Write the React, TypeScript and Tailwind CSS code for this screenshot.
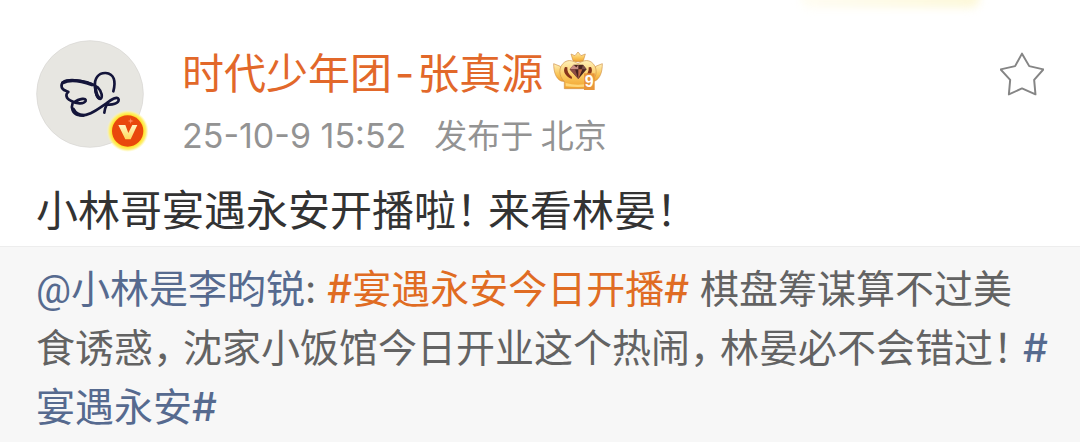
import type { ReactNode } from "react";

const latin = "font-['Inter','Noto_Sans_CJK_SC',sans-serif] leading-none";

function Avatar() {
  return (
    <svg
      viewBox="50 28 324 324"
      className="size-[108px] shrink-0 overflow-visible"
      role="img"
      aria-label="时代少年团-张真源"
    >
      <defs>
        <radialGradient id="glow">
          <stop offset="0.76" stopColor="#ffe52e" />
          <stop offset="0.88" stopColor="#fff07a" />
          <stop offset="1" stopColor="#fff8b8" stopOpacity="0" />
        </radialGradient>
        <linearGradient id="vee" x1="0" y1="0" x2="0" y2="1">
          <stop offset="0" stopColor="#fff6c4" />
          <stop offset="1" stopColor="#ffd95a" />
        </linearGradient>
      </defs>
      <circle cx="212" cy="190" r="160" fill="#e7e6e1" stroke="#d6d5d1" strokeWidth="2" />
      <g fill="none" stroke="#14153a" strokeWidth="8" strokeLinecap="round" strokeLinejoin="round">
        <path d="M282 182C290 152 285 129 259 127C236 126 225 145 227 166C228 184 233 204 242 205C252 202 247 182 236 171C222 160 192 149 158 148C136 148 124 155 127 169C129 180 139 179 147 184C138 190 139 203 154 210C170 220 194 221 199 211C201 201 183 202 160 217C154 232 160 248 176 253C205 260 233 237 261 218C276 207 294 195 298 206C299 219 278 224 260 221" />
        <path d="M262 222C259 228 256 235 255 246" />
        <path d="M130 156C150 146 185 150 218 162M228 168C229 185 234 198 240 203M162 236C168 248 178 254 192 254" strokeWidth="10" />
      </g>
      <circle cx="325" cy="301" r="63" fill="url(#glow)" />
      <circle cx="325" cy="301" r="47" fill="#e9480c" />
      <path d="M297 283H318L327 307L339 283H354L334 326H318Z" fill="url(#vee)" />
      <path d="M334 262L336 269L343 271L336 273L334 280L332 273L325 271L332 269Z" fill="#ff8a5c" />
    </svg>
  );
}

function CrownBadge() {
  return (
    <svg viewBox="40 30 150 120" className="h-10 w-[50px] shrink-0" role="img" aria-label="等级 9">
      <defs>
        <linearGradient id="gold" x1="0" y1="0" x2="0" y2="1">
          <stop offset="0" stopColor="#fff0b8" />
          <stop offset="0.55" stopColor="#fbc95e" />
          <stop offset="1" stopColor="#f0a02c" />
        </linearGradient>
      </defs>
      <g fill="url(#gold)" stroke="#d0934a" strokeWidth="2" strokeLinejoin="round">
        <path d="M42 68L62 76L70 106L78 122L64 120C48 112 42 92 42 68Z" />
        <path d="M188 68L168 76L160 106L152 122L166 120C182 112 188 92 188 68Z" />
        <path d="M74 143V122C56 104 56 78 74 64C88 54 102 60 115 68C128 60 142 54 156 64C174 78 174 104 156 122V143Z" />
        <path d="M100 59L94 39L106 44L115 33L124 44L137 39L131 59Q115 66 100 59Z" />
      </g>
      <path
        d="M76 78C68 92 78 106 96 114L97 108C86 100 82 90 83 79ZM154 78C162 92 152 106 134 114L133 108C144 100 148 90 147 79Z"
        fill="#87351c"
      />
      <path d="M78 126Q115 136 152 126V136Q115 140 78 136Z" fill="#ffd678" />
      <path d="M102 71H130L141 85L116 114L90 85Z" fill="#49241f" />
      <path d="M102 71L116 85H90ZM116 71L116 85L106 85Z" fill="#c98d83" />
      <path d="M90 85H106L116 114Z" fill="#8d4c43" />
      <path d="M116 85H128L116 114Z" fill="#c16b45" />
      <path d="M130 71L141 85H126Z" fill="#7d5148" />
      <rect x="133" y="97" width="32" height="50" fill="#e8953b" />
      <text
        x="149"
        y="139"
        textAnchor="middle"
        fill="#fff"
        className="font-['Liberation_Sans',sans-serif] text-[48px] font-bold"
      >
        9
      </text>
    </svg>
  );
}

function StarIcon() {
  return (
    <svg viewBox="56 36 134 132" className="size-11" aria-hidden="true">
      <path
        d="M123 40L145 78L188 88L160 120L164 164L123 146L83 164L87 120L58 88L102 78Z"
        fill="none"
        stroke="#858585"
        strokeWidth="6"
        strokeLinejoin="round"
      />
    </svg>
  );
}

/* Full-width punctuation set on a narrower advance than the characters. */
function Mark({ children }: { children: ReactNode }) {
  return <span className="inline-block w-[30px] leading-none whitespace-nowrap">{children}</span>;
}

function Hash() {
  return <span className={`${latin} font-medium`}>#</span>;
}

export default function App() {
  return (
    <article className="relative flex min-h-screen flex-col overflow-hidden bg-white font-['Noto_Sans_CJK_SC',sans-serif]">
      <div className="absolute -top-3 left-[800px] h-5 w-[180px] rounded-full bg-linear-to-r from-[#fffdf3] to-[#fdf8d8] blur-xs" />

      <header className="flex items-start px-9 pt-10">
        <Avatar />
        <div className="min-w-0 flex-1 pl-[38px]">
          <div className="flex items-center gap-2.5">
            <a href="#profile" className="text-[42px] leading-[62px] whitespace-nowrap text-[#e2682a]">
              时代少年团<span className={`${latin} px-[3px]`}>-</span>张真源
            </a>
            <CrownBadge />
          </div>
          <p className="flex items-baseline gap-7 text-[33px] leading-[64px] whitespace-nowrap text-[#939393]">
            <time dateTime="2025-10-09T15:52" className={`${latin} text-[34px]`}>
              25-10-9 15:52
            </time>
            <span>发布于 北京</span>
          </p>
        </div>
        <button type="button" aria-label="收藏" className="mt-3">
          <StarIcon />
        </button>
      </header>

      <p className="mt-2.5 px-9 pb-1.5 text-[42px] leading-[64px] text-[#333]">
        小林哥宴遇永安开播啦<span className="inline-block w-8 leading-none whitespace-nowrap">！</span>来看林晏
        <span className="inline-block w-8 leading-none whitespace-nowrap">！</span>
      </p>

      <blockquote className="flex-1 border-t border-[#ededed] bg-[#f7f7f7] pt-2.5 pr-8 pl-9 text-[39px] leading-[59px] text-[#636363]">
        <a href="#author" className="text-[#566a8f]">
          <span className="font-['Roboto',sans-serif] leading-none">@</span>小林是李昀锐
        </a>
        <span className={latin}>: </span>
        <a href="#topic-premiere" className="text-[#e06c23]">
          <Hash />
          宴遇永安今日开播
          <Hash />
        </a>
        <span className={latin}> </span>
        棋盘筹谋算不过美食诱惑<Mark>，</Mark>沈家小饭馆今日开业这个热闹<Mark>，</Mark>林晏必不会错过<Mark>！</Mark>
        <a href="#topic" className="text-[#566a8f]">
          <Hash />
          宴遇永安
          <Hash />
        </a>
      </blockquote>
    </article>
  );
}
